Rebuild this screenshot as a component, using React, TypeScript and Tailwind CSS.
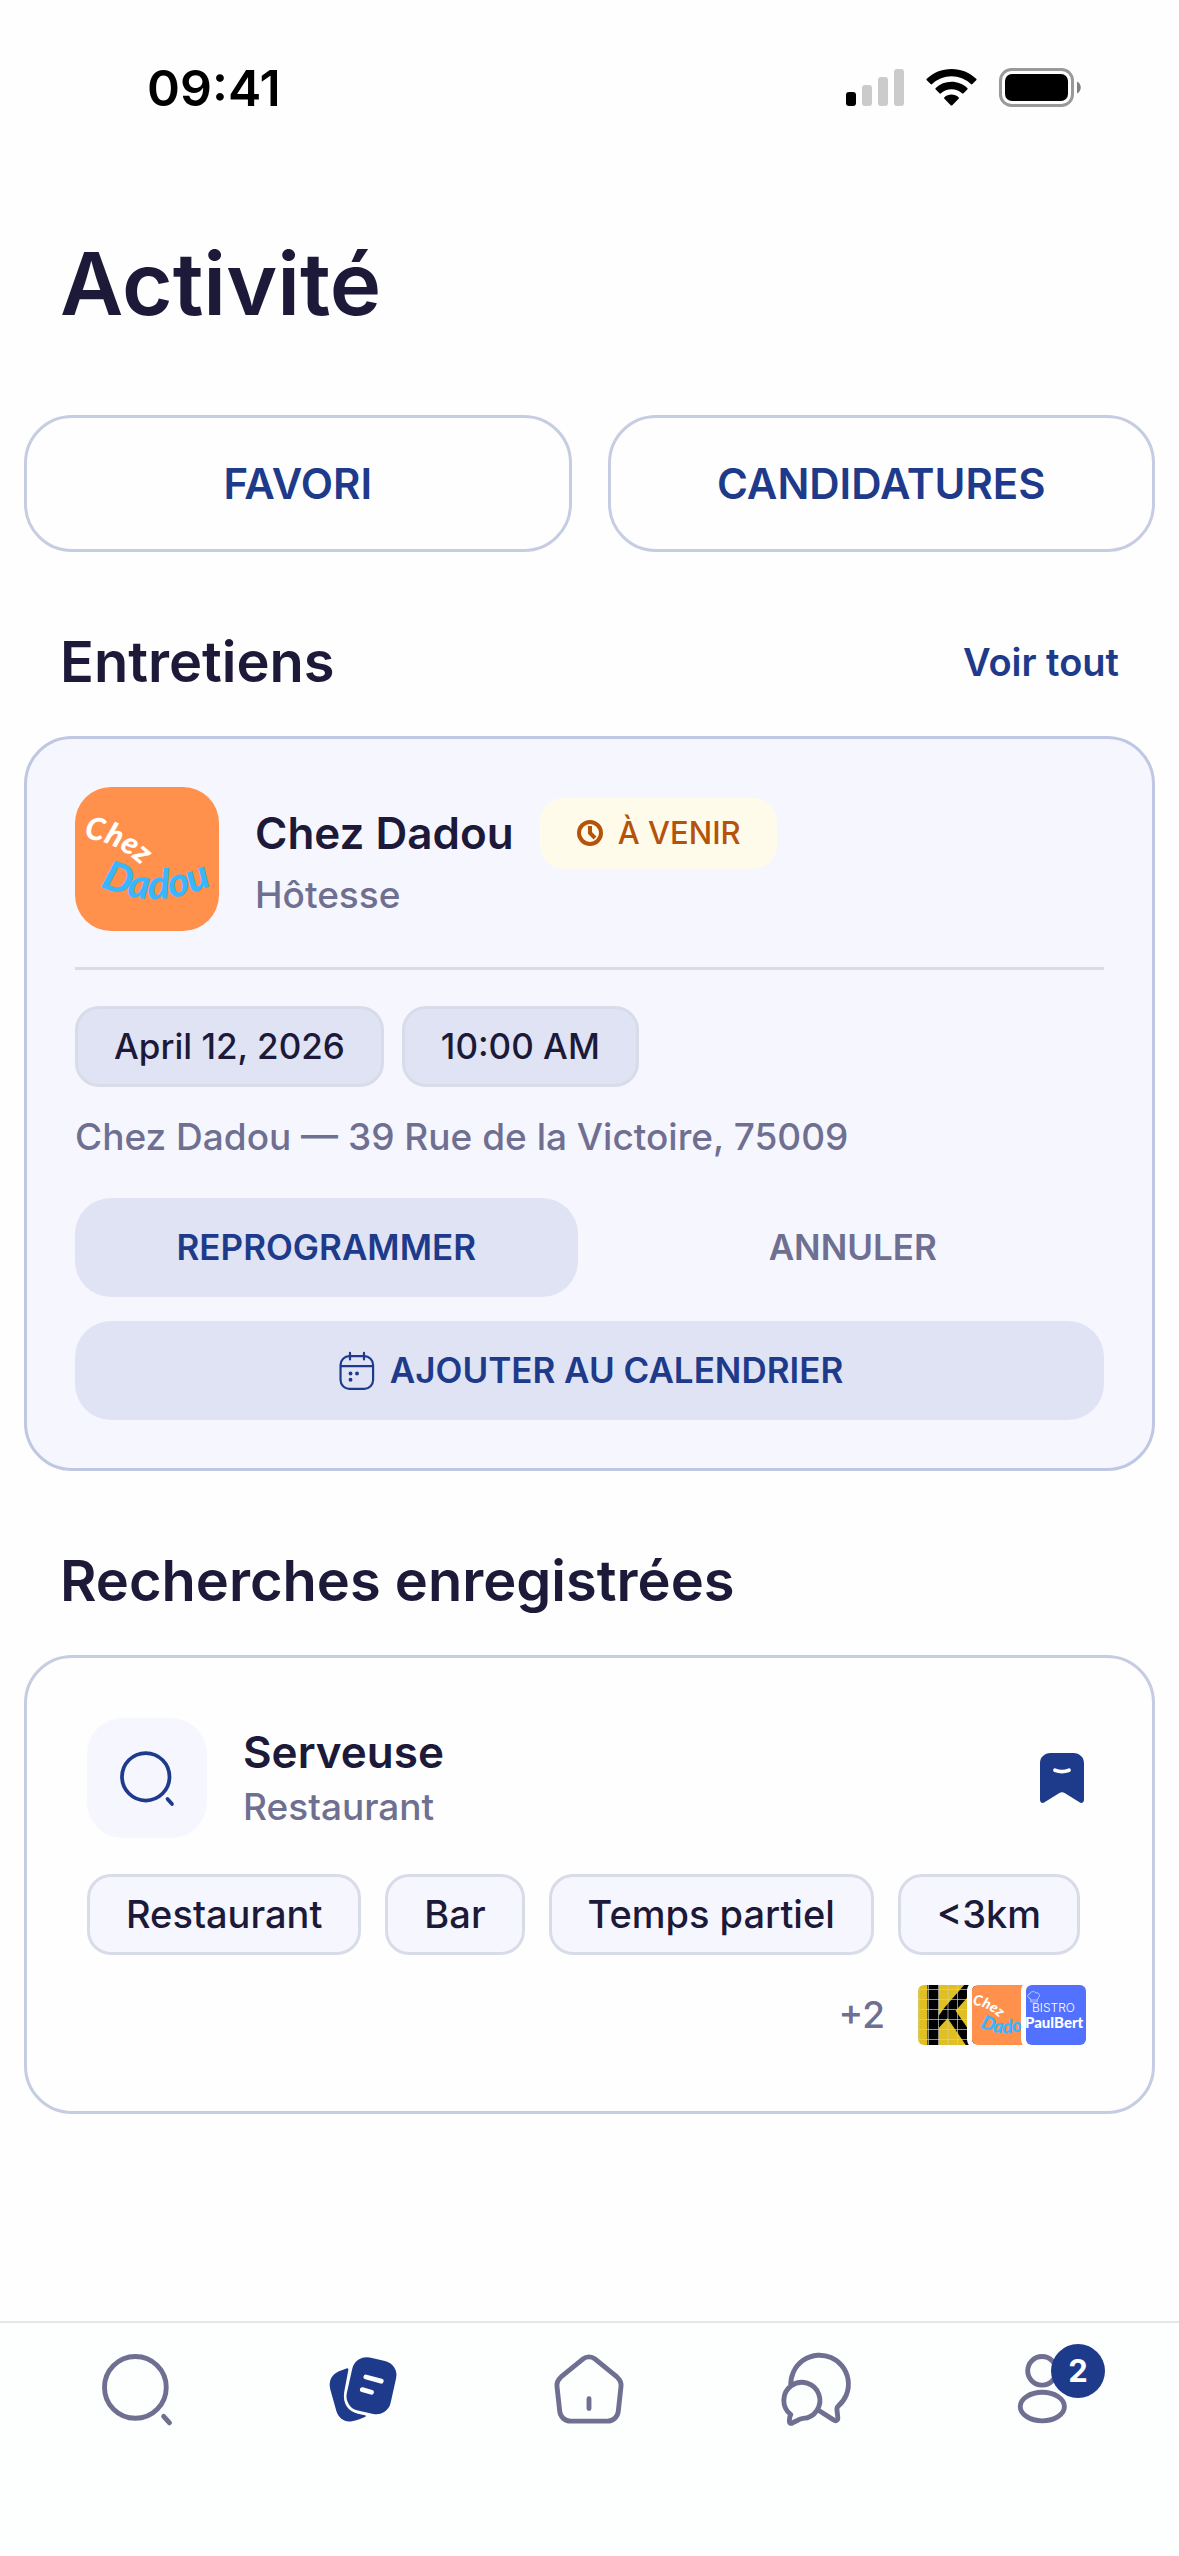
import React, { useState } from "react";

const tags = ["Restaurant", "Bar", "Temps partiel", "<3km"];

const SearchIcon = ({ className }: { className: string }) => (
  <svg viewBox="0 0 24 24" fill="none" stroke="currentColor" strokeWidth="1.5" strokeLinecap="round" className={className}>
    <circle cx="11.5" cy="11.5" r="9.5" />
    <path d="M20.2 20.4l1.8 2" />
  </svg>
);

const ActivityIcon = () => (
  <svg viewBox="0 0 24 24" className="size-[78px]">
    <path
      fill="currentColor"
      d="M7.1 5.6C7.3 5.5 7.6 5.8 7.5 6.1L6.2 13C5.7 16.6 7.5 18.9 10.4 19.6L12.6 20.1C13 20.2 13 20.5 12.6 20.6C11.4 21.2 10 21.6 8.6 21.9C6.4 22.3 4.6 21.2 3.8 18.8L1.9 12C1.4 9.3 2.3 7.6 4.6 6.5Z"
    />
    <rect x="7.7" y="2.65" width="13.8" height="16.7" rx="4.5" fill="currentColor" transform="rotate(12.5 14.6 11)" />
    <path d="M12.9 8.3l4.7 1.3M11.8 12.2l2.8 .8" fill="none" stroke="white" strokeWidth="1.5" strokeLinecap="round" />
  </svg>
);

const HomeIcon = () => (
  <svg viewBox="0 0 24 24" fill="none" stroke="currentColor" strokeWidth="1.5" strokeLinecap="round" className="size-[78px]">
    <path d="M10.2 2.75C11.2 1.9 12.8 1.9 13.8 2.75L20.6 8.3C21.5 9.1 21.95 10.1 21.85 11.2L21 18.9C20.8 20.6 19.4 21.9 17.7 21.9H6.3C4.6 21.9 3.2 20.6 3 18.9L2.15 11.2C2.05 10.1 2.5 9.1 3.4 8.3Z" />
    <path d="M12 15v3" />
  </svg>
);

const ChatIcon = () => (
  <svg viewBox="0 0 24 24" fill="none" stroke="currentColor" strokeWidth="1.5" strokeLinejoin="round" className="size-[78px]">
    <path d="M4.25 10.9A8.87 8.87 0 1 1 18.9 17.2C18.4 17.6 18.4 17.9 18.45 18.4L18.7 20.7C18.8 21.7 18.1 22 17.4 21.5L12.4 18.3" />
    <path d="M4.25 19.9A5.55 5.55 0 1 1 8 21.05C7.3 21.1 6.9 21.3 6.4 21.6L4.8 22.4C4.1 22.8 3.7 22.4 3.8 21.7L3.95 20.6C4 20.2 4.2 20.1 4.25 19.9Z" />
  </svg>
);

const UserIcon = () => (
  <svg viewBox="0 0 24 24" fill="none" stroke="currentColor" strokeWidth="1.5" className="size-[78px]">
    <circle cx="12" cy="6.4" r="4.4" />
    <ellipse cx="12.1" cy="17.4" rx="6.8" ry="4.4" />
  </svg>
);

const CalendarIcon = () => (
  <svg viewBox="0 0 24 24" fill="none" stroke="currentColor" strokeWidth="1.25" strokeLinecap="round" className="size-[42px]">
    <rect x="2.6" y="3.5" width="18.6" height="18.7" rx="5" />
    <path d="M8 1.6v3.8M16 1.6v3.8M2.8 9.2h18.2" />
    <g fill="currentColor" stroke="none">
      <circle cx="8.3" cy="13.4" r="1.1" />
      <circle cx="12" cy="13.4" r="1.1" />
      <circle cx="8.3" cy="17" r="1.1" />
    </g>
  </svg>
);

const ClockIcon = () => (
  <svg viewBox="0 0 30 30" fill="none" stroke="currentColor" strokeWidth="4" className="size-[30px]">
    <circle cx="14" cy="15" r="11" />
    <path d="M14 8v7l5 5" strokeWidth="4" />
  </svg>
);

const BookmarkIcon = () => (
  <svg viewBox="0 0 24 24" className="size-[60px]">
    <path
      fill="currentColor"
      d="M7.4 2h9.2C19 2 20.8 3.7 20.8 6.1v14.6c0 1.1-.9 1.6-1.8 1l-5.800-3.600c-.8-.5-1.600-.5-2.400 0L5 21.700c-.9.6-1.800.1-1.800-1V6.100C3.200 3.700 5 2 7.400 2Z"
    />
    <path d="M9.200 8.900c1.800.7 3.800.7 5.600 0" fill="none" stroke="white" strokeWidth="1.500" strokeLinecap="round" />
  </svg>
);

const DadouLogo = ({ id, viewBox, className }: { id: string; viewBox: string; className: string }) => (
  <svg viewBox={viewBox} className={className} fontFamily="Lato, sans-serif" fontWeight="900" fontStyle="italic">
    <rect width="144" height="144" fill="#ff914d" />
    <path id={id + "-top"} d="M9 52Q42 53 72 84" fill="none" />
    <path id={id + "-bottom"} d="M25 99Q82 128 148 93" fill="none" />
    <text fontSize="31" fill="white">
      <textPath href={"#" + id + "-top"}>Chez</textPath>
    </text>
    <text fontSize="41" fill="#38b6ff">
      <textPath href={"#" + id + "-bottom"}>Dadou</textPath>
    </text>
  </svg>
);

const KLogo = () => (
  <svg viewBox="0 0 60 60" className="size-[60px] rounded-md">
    <rect width="60" height="60" fill="#dfbf22" />
    <text x="3" y="62" fontSize="88" fontWeight="600" fontFamily="Inter, sans-serif">
      K
    </text>
    <path
      d="M0 4.500H60M0 14.500H60M0 24.500H60M0 34.500H60M0 44.500H60M0 54.500H60M1 0V60M10.500 0V60M20.500 0V60M30 0V60M39.500 0V60"
      stroke="#c9cfc0"
      strokeOpacity=".7"
    />
  </svg>
);

const BistroLogo = () => (
  <svg viewBox="0 0 60 60" className="size-[60px] rounded-md" fill="white">
    <rect width="60" height="60" fill="#5271ff" />
    <path
      d="M5 17l-1-4C1 13 1 9 4 9c0-3 5-3 6-1 3-1 5 3 2 5l-1 4zM5 15h6"
      fill="none"
      stroke="white"
      strokeWidth=".6"
    />
    <text x="6" y="27" fontSize="12" fontWeight="300" fontFamily="Inter, sans-serif">
      BISTRO
    </text>
    <text x="-1" y="43" fontSize="15" fontWeight="900" fontFamily="Lato, sans-serif">
      PaulBert
    </text>
  </svg>
);

const StatusBar = () => (
  <div className="flex h-[176px] items-center justify-between pr-[97px] pl-[147px] text-black">
    <span className="text-[50px] font-semibold">09:41</span>
    <div className="flex items-center gap-[22px]">
      <svg viewBox="0 0 58 38" className="h-[38px] w-[58px]">
        <rect y="23" width="10" height="14" rx="3" />
        <g fill="#cbcbcb">
          <rect x="16" y="16" width="10" height="21" rx="3" />
          <rect x="32" y="8" width="10" height="29" rx="3" />
          <rect x="48" width="10" height="37" rx="3" />
        </g>
      </svg>
      <svg viewBox="0 0 51 38" className="h-[38px] w-[51px]">
        <path d="M25.500 0C35 0 44 3.700 50.200 9.800c.5.500.5 1 0 1.500L46.400 15c-.5.500-1 .5-1.500 0a28 28 0 0 0-38.800 0c-.5.500-1 .5-1.500 0L.8 11.300c-.5-.5-.5-1 0-1.500C7 3.700 16 0 25.500 0Z" />
        <path d="M25.500 12.800c6 0 11.600 2.300 15.800 6.200.5.500.5 1 0 1.500l-3.800 3.800c-.5.500-1 .5-1.500 0a15.500 15.500 0 0 0-21 0c-.5.500-1 .5-1.500 0l-3.800-3.800c-.5-.5-.5-1 0-1.500a23 23 0 0 1 15.800-6.200Z" />
        <path d="M25.500 25.500c2.700 0 5.200 1 7.100 2.700.5.500.5 1 0 1.500l-6.300 6.500c-.5.500-1.100.5-1.600 0l-6.300-6.500c-.5-.5-.5-1 0-1.500 1.900-1.700 4.400-2.700 7.100-2.700Z" />
      </svg>
      <svg viewBox="0 0 83 40" className="h-[40px] w-[83px]">
        <rect x="1.500" y="1.500" width="72" height="36" rx="11" fill="none" stroke="#999" strokeWidth="3" />
        <rect x="6" y="6" width="63" height="27" rx="7" />
        <path d="M78 13.500c5 2 5 10 0 12z" fill="#808080" />
      </svg>
    </div>
  </div>
);

const App: React.FC = () => {
  const [active, setActive] = useState("activity");

  const navItems = [
    { id: "search", label: "Recherche", icon: <SearchIcon className="size-[78px]" /> },
    { id: "activity", label: "Activité", icon: <ActivityIcon /> },
    { id: "home", label: "Accueil", icon: <HomeIcon /> },
    { id: "messages", label: "Messages", icon: <ChatIcon /> },
    { id: "profile", label: "Profil", icon: <UserIcon />, badge: 2 },
  ];

  return (
    <div className="flex min-h-screen flex-col bg-[#fefefe] font-['Inter',sans-serif] text-[#1c1939]">
      <StatusBar />

      <main className="flex flex-col px-6 pb-12">
        <h1 className="px-9 pt-12 text-[87px] leading-[120px] font-semibold">Activité</h1>

        <div className="mt-[71px] grid grid-cols-2 gap-9 text-[42px] font-semibold text-[#1e3a8a]">
          <button className="h-[137px] rounded-[48px] border-3 border-[#c6cde2]">FAVORI</button>
          <button className="h-[137px] rounded-[48px] border-3 border-[#c6cde2]">CANDIDATURES</button>
        </div>

        <div className="mt-9 flex h-[148px] items-center justify-between px-9">
          <h2 className="text-[56px] font-semibold">Entretiens</h2>
          <a href="#entretiens" className="text-[38px] font-semibold text-[#1e3a8a]">
            Voir tout
          </a>
        </div>

        <section className="rounded-[48px] border-3 border-[#bfc7e2] bg-[#f6f6ff] p-12">
          <div className="flex items-center gap-9 border-b-3 border-[#d8dce9] pb-9">
            <DadouLogo id="dadou" viewBox="0 0 144 144" className="size-[144px] rounded-[36px]" />
            <div>
              <div className="flex items-center gap-[26px]">
                <h3 className="text-[44px] font-semibold">Chez Dadou</h3>
                <span className="flex h-[71px] items-center gap-3 rounded-3xl bg-[#fffbeb] px-9 text-[31px] font-medium text-[#b45309]">
                  <ClockIcon />À VENIR
                </span>
              </div>
              <p className="text-[37px] leading-[52px] font-medium text-[#6f6f91]">Hôtesse</p>
            </div>
          </div>

          <div className="mt-9 flex gap-[18px] text-[35px] font-medium">
            <span className="flex h-[81px] items-center rounded-3xl border-3 border-[#d8dce9] bg-[#dfe3f4] px-9">
              April 12, 2026
            </span>
            <span className="flex h-[81px] items-center rounded-3xl border-3 border-[#d8dce9] bg-[#dfe3f4] px-9">
              10:00 AM
            </span>
          </div>

          <p className="mt-6 text-[37px] leading-[51px] font-medium text-[#6f6f91]">
            Chez Dadou — 39 Rue de la Victoire, 75009
          </p>

          <div className="mt-9 grid grid-cols-2 gap-6 text-[35px] font-semibold">
            <button className="h-[99px] rounded-[36px] bg-[#dfe3f4] text-[#1e3a8a]">REPROGRAMMER</button>
            <button className="h-[99px] rounded-[36px] text-[#6f6f91]">ANNULER</button>
            <button className="col-span-2 flex h-[99px] items-center justify-center gap-3 rounded-[36px] bg-[#dfe3f4] text-[#1e3a8a]">
              <CalendarIcon />
              AJOUTER AU CALENDRIER
            </button>
          </div>
        </section>

        <div className="mt-9 flex h-[148px] items-center px-9">
          <h2 className="text-[56px] font-semibold">Recherches enregistrées</h2>
        </div>

        <section className="rounded-[48px] border-3 border-[#c6cde2] px-[60px] pt-[60px] pb-[66px]">
          <div className="flex items-center gap-9">
            <span className="flex size-[120px] items-center justify-center rounded-[36px] bg-[#f6f6ff] text-[#1e3a8a]">
              <SearchIcon className="size-[60px]" />
            </span>
            <div className="flex-1">
              <h3 className="text-[44px] leading-[57px] font-semibold">Serveuse</h3>
              <p className="text-[37px] leading-[51px] font-medium text-[#6f6f91]">Restaurant</p>
            </div>
            <button aria-label="Retirer la recherche" className="text-[#1e3a8a]">
              <BookmarkIcon />
            </button>
          </div>

          <div className="mt-9 flex flex-wrap gap-6 text-[38px] font-medium">
            {tags.map((tag) => (
              <span
                key={tag}
                className="flex h-[81px] items-center rounded-3xl border-3 border-[#d8dce9] bg-[#f6f6ff] px-9"
              >
                {tag}
              </span>
            ))}
          </div>

          <div className="mt-[30px] flex h-[60px] items-center justify-end gap-[33px] pr-[6px]">
            <span className="text-[37px] font-medium text-[#6f6f91]">+2</span>
            <div className="flex -space-x-[6px]">
              <KLogo />
              <DadouLogo
                id="dadou-small"
                viewBox="8 9 128 128"
                className="size-[60px] rounded-md ring-[5px] ring-[#fefefe]"
              />
              <div className="rounded-md ring-[5px] ring-[#fefefe]">
                <BistroLogo />
              </div>
            </div>
          </div>
        </section>
      </main>

      <nav className="mt-auto grid grid-cols-5 border-t-2 border-[#e6e6e6] bg-[#fdfefe] px-6 pt-[27px] pb-32">
        {navItems.map((item) => (
          <button
            key={item.id}
            aria-label={item.label}
            onClick={() => setActive(item.id)}
            className={
              item.id === active ? "flex justify-center text-[#1e3a8a]" : "flex justify-center text-[#6f6f91]"
            }
          >
            <span className="relative">
              {item.icon}
              {item.badge && (
                <span className="absolute -top-[6px] -right-6 flex size-[54px] items-center justify-center rounded-full bg-[#1e3a8a] text-[31px] font-bold text-white">
                  {item.badge}
                </span>
              )}
            </span>
          </button>
        ))}
      </nav>
    </div>
  );
};

export default App;
